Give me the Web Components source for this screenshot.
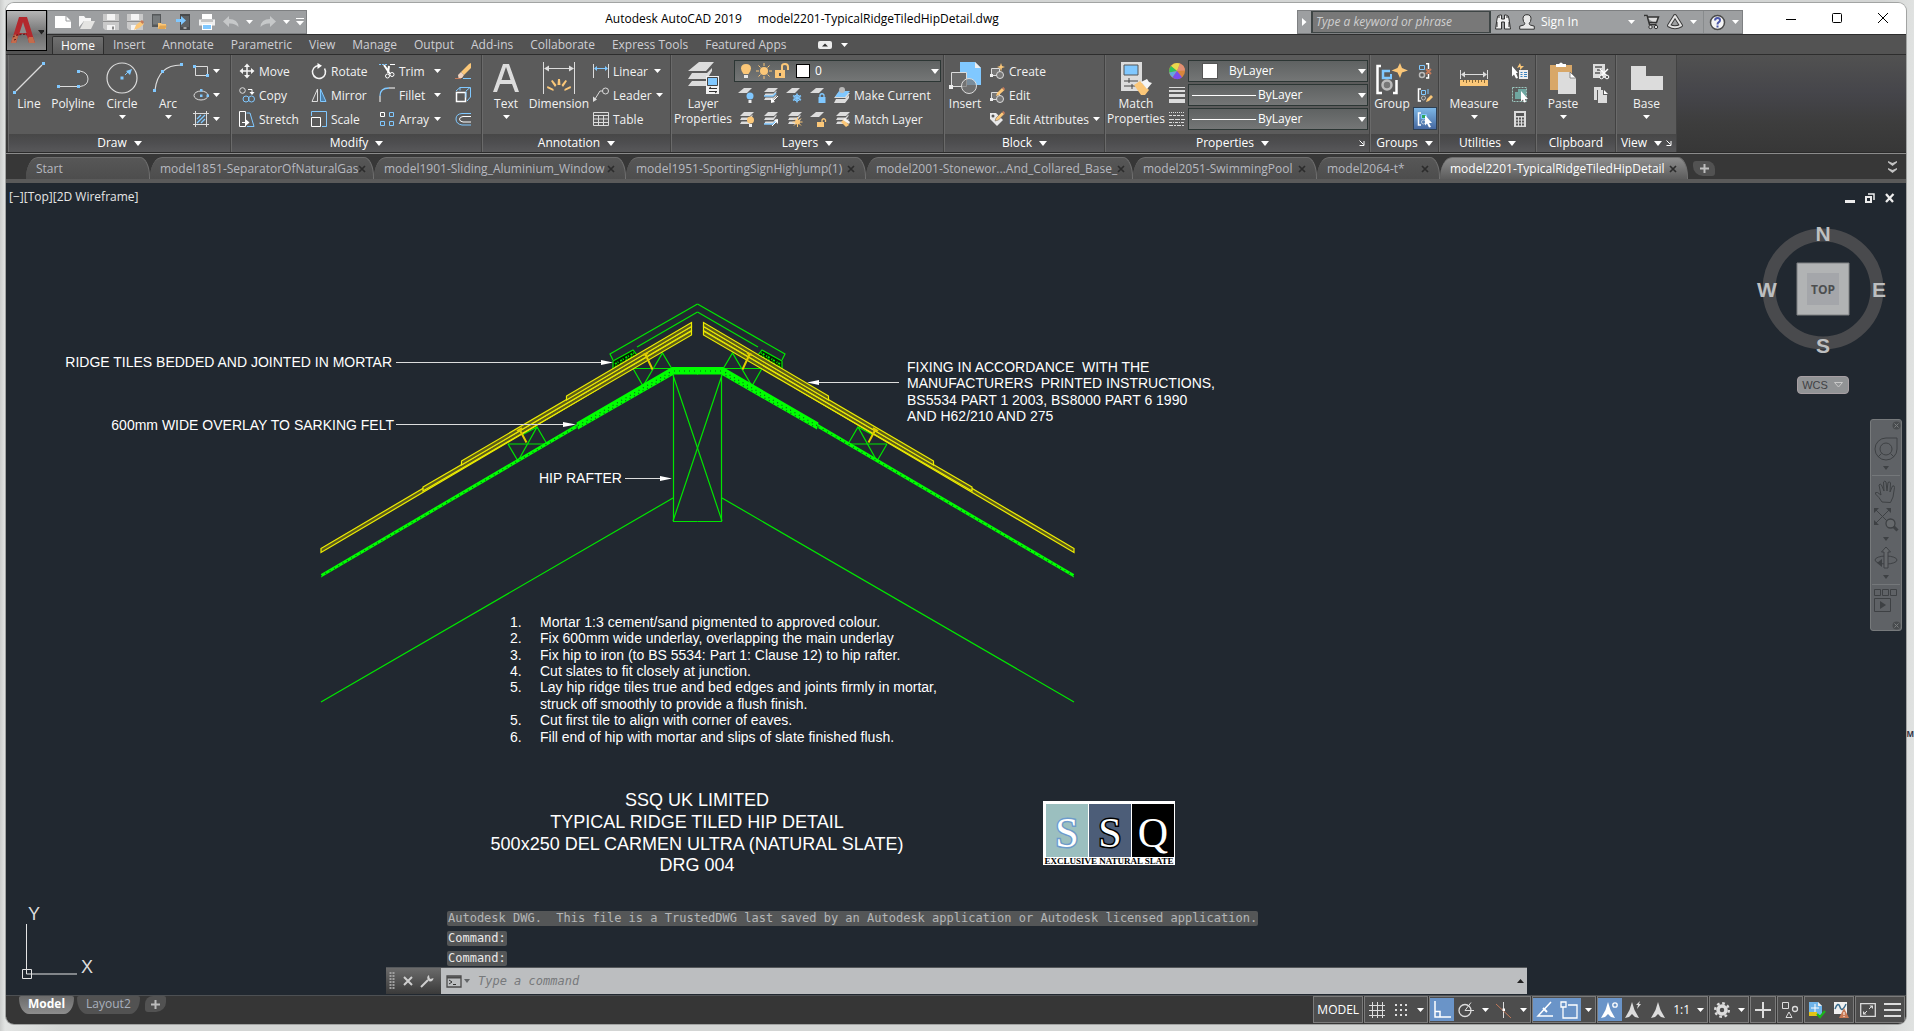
<!DOCTYPE html>
<html lang="en">
<head>
<meta charset="utf-8">
<title>Autodesk AutoCAD 2019</title>
<style>
  html, body {
    height: 100%;
    margin: 0;
  }
  body {
    font: 12px/16px "Open Sans", "Noto Sans", sans-serif;
    background: #d3d5d4;
    overflow: hidden;
  }
</style>
</head>
<body>
<cad-app></cad-app>

<script>
// Palette shared by the icons
const W = '#dcdcdc';
const B = '#80c8ff';
const O = '#fbc778';
const R = '#c47a5a';

const sheets = (fill = W) => `
  <path d="M6 1h10l-4 4H2z" fill="${fill}"/><path d="M3.500 6.500h8l3-3v1.500l-3 4H2z" fill="${W}"/>
  <path d="M3.500 10.500h8l3-3v1.500l-3 4H2z" fill="${W}"/>`;
const bracket = `<path d="M4 2H1.500v12H4" fill="none" stroke="#fff" stroke-width="1.500"/>`;

// name: [width, height, markup]
const icons = {
  caret: [7, 4, `<path d="M0 0h7L3.500 4z" fill="#fff"/>`],
  wide: [8, 5, `<path d="M0 0h8L4 5z" fill="#fff"/>`],
  up: [7, 4, `<path d="M0 4h7L3.500 0z" fill="#222"/>`],
  launch: [6, 6, `<path d="M0.500 0.500l4 4M5 1v4.500H0.500" fill="none" stroke="#fff"/>`],
  logo: [24, 28, `<path d="M0 27 8 1h8l8 26h-6l-2-7q-4-5-9 0l-2 7z" fill="#b3282d"/><path d="M12 6 8.500 17h7z" fill="#8d8d8d"/>
    <path d="M0 27l2-7q2-3 5 0l-2 7zM24 27l-2-6-4 0-1 2 1 4z" fill="#c46c4c"/><path d="M2 21l4-2 10-1M3 24l3-1" stroke="#5d1114" stroke-dasharray="2 1.500" fill="none"/>`],

  // quick access
  fresh: [16, 16, `<path d="M0 2h11l5 5v7H0z" fill="#fff"/><path d="M11 2v5h5" fill="none" stroke="#9b9d9f"/>`],
  open: [18, 16, `<path d="M1 13V2h5l1.500 2H13v3H6z" fill="#f6f6f6"/><path d="M6 7h11l-4 8H2z" fill="#e4e4e2"/>`],
  save: [16, 16, `<path d="M0 0h16v16H2l-2-2z" fill="#c9c9c9"/><path d="M4 0h8v6H4zM4 11h8v5H4z" fill="#f4f4f4"/><path d="M0 7.500h16" stroke="#8f8f8f"/><path d="M9 12.500h2v3H9z" fill="#888"/>`],
  saveas: [16, 16, `<path d="M0 0h16v16H2l-2-2z" fill="#c9c9c9"/><path d="M4 0h8v6H4zM4 11h5v5H4z" fill="#f4f4f4"/><path d="M0 7.500h16" stroke="#8f8f8f"/><path d="M7 16l2-5 5-4 3 3-5 4z" fill="${O}"/><path d="M13 7.500 15 6l2 2-1.500 2z" fill="${R}"/>`],
  webopen: [16, 16, `<path d="M1 0h9v13H1z" fill="#55585a"/><path d="M2 1.500h7v9H2z" fill="#777b7d"/><path d="M7 15V9h3l1 1h4v5z" fill="${O}"/><path d="M9 11.500h7l-2 3.500H7z" fill="#e0a552"/>`],
  websave: [16, 16, `<path d="M5 0h10v16H5z" fill="#484a4c"/><path d="M6 2h8v11H6z" fill="#5e6163"/><path d="M1 5h5V2l5 4.500L6 11V8H1z" fill="${B}"/><path d="M8.500 14h3" stroke="#fff"/>`],
  print: [16, 16, `<path d="M3 0h10v5H3z" fill="#fff"/><path d="M0 5.500h16v6H0z" fill="#efefef"/><path d="M2 7h12" stroke="#999"/><path d="M3 10h10v6H3z" fill="#fff"/><path d="M4 11h8v4H4z" fill="${B}"/>`],
  undo: [16, 12, `<path d="M6 0v3q9 0 9.500 8Q12 7 6 7.500V11L0 5.500z" fill="#c6c8c9"/>`],
  redo: [16, 12, `<path d="M10 0v3Q1 3 .5 11 4 7 10 7.500V11l6-5.500z" fill="#c6c8c9"/>`],
  custom: [8, 8, `<path d="M0 .5h8" stroke="#fff"/><path d="M0 3h8L4 7.500z" fill="#fff"/>`],
  play: [5, 8, `<path d="M0 0v8l4.500-4z" fill="#fff"/>`],
  find: [16, 16, `<path d="M2 5q0-4 3-4h1.500v4h3V1H11q3 0 3 4l1.500 10h-6V8h-3v7H.5z" fill="#f2f2f2" stroke="#333"/><path d="M2 8v5M14 8v5M3 3h2M11 3h2" stroke="#333"/>`],
  user: [16, 16, `<path d="M8 .7q4 0 4 4 0 3-2 5 .3 1.500 5.300 2.500v3H.7v-3Q5.700 11.200 6 9.700q-2-2-2-5 0-4 4-4z" fill="#e8e8e8" stroke="#333"/>`],
  cart: [17, 16, `<path d="M1 1.500h3l2.500 9h7M4.500 3h11l-2 5.500H6" fill="#ddd" stroke="#333" stroke-width="1.500"/><circle cx="7.500" cy="13" r="1.700" fill="#ddd" stroke="#333"/><circle cx="13" cy="13" r="1.700" fill="#ddd" stroke="#333"/>`],
  a360: [16, 16, `<path d="M8 2 2 11.500q6 3.500 12 0z" fill="none" stroke="#3c3c3c" stroke-width="4" stroke-linejoin="round"/><path d="M8 2 2 11.500q6 3.500 12 0z" fill="none" stroke="#e4e4e4" stroke-width="2" stroke-linejoin="round"/>`],
  help: [17, 17, `<circle cx="8.500" cy="8.500" r="7" fill="#f4f4f4" stroke="#4a4a4a" stroke-width="1.500"/><path d="M6 6.500q0-2.500 2.500-2.500t2.500 2.200q0 1.300-1.500 2.200-1 .6-1 2" fill="none" stroke="#4b56a8" stroke-width="2"/><path d="M7.500 11.500h2v2h-2z" fill="#4b56a8"/>`],
  min: [12, 12, `<path d="M1 7.500h10" stroke="#000"/>`],
  max: [12, 12, `<rect x="1.500" y="1.500" width="9" height="9" rx="1" fill="none" stroke="#000"/>`],
  close: [12, 12, `<path d="M1 1l10 10M11 1 1 11" stroke="#000"/>`],
  panelmin: [14, 8, `<rect width="14" height="8" rx="2" fill="#ededed"/><path d="M4 5.500h6L7 2.500z" fill="#333"/>`],

  // draw
  line: [32, 32, `<path d="M3 29 29 3" stroke="${W}" stroke-width="1.200"/><path d="M0 29h3v3H0zM29 0h3v3h-3z" fill="${B}"/>`],
  polyline: [32, 32, `<path d="M2 24.500h21q8-1 8-7.500T23 9" fill="none" stroke="${W}"/><path d="M0 23h3v3H0zM20 23h3v3h-3zM20 8h3v3h-3z" fill="${B}"/>`],
  circle: [32, 32, `<circle cx="16" cy="16" r="15" fill="none" stroke="${W}" stroke-width="1.200"/><path d="M14.500 14.500h3v3h-3z" fill="${B}"/><path d="M19 13l3-3" stroke="${B}"/><path d="M20 9l6-2-2 6z" fill="${B}"/>`],
  arc: [32, 32, `<path d="M3 28Q6 3 29 3" fill="none" stroke="${W}" stroke-width="1.200"/><path d="M1 27h3v3H1zM9 8h3v3H9zM28 1h3v3h-3z" fill="${B}"/>`],
  rect: [16, 16, `<path d="M2.500 3.500h12v9h-12z" fill="none" stroke="${W}"/><path d="M0 2h3v3H0zM13 11h3v3h-3z" fill="${B}"/>`],
  ellipse: [16, 16, `<ellipse cx="8" cy="8.500" rx="7" ry="4.500" fill="none" stroke="${W}"/><path d="M7 2h2.500v2.500H7zM7 7.500h2.500V10H7zM13.500 7.500H16V10h-2.500z" fill="${B}"/>`],
  hatch: [16, 16, `<path d="M0 2.500h16M0 13.500h16M2.500 0v16M13.500 0v16" stroke="${W}"/><path d="M4 8l4-4M4 12l8-8M8 12l4-4" stroke="${B}" stroke-width="1.300"/>`],

  // modify
  move: [16, 16, `<path d="M8 2v12M2 8h12" stroke="#f4f4f4" stroke-width="1.500"/><path d="M5 4 8 .5 11 4zM5 12l3 3.500 3-3.500zM4 5 .5 8 4 11zM12 5l3.500 3L12 11z" fill="#f4f4f4"/>`],
  copy: [16, 16, `<circle cx="3.500" cy="3.500" r="2.800" fill="none" stroke="${W}"/><path d="M9 2.500h4V6" fill="none" stroke="#fff"/><path d="M10.500 5h5L13 8z" fill="#fff"/><circle cx="7" cy="12" r="3" fill="none" stroke="${B}"/><circle cx="12.500" cy="12" r="3" fill="none" stroke="${B}"/>`],
  stretch: [16, 16, `<path d="M.5.500h6v15h-6z" fill="none" stroke="#fff"/><path d="M7.500 2H11l4 13.500H8" fill="none" stroke="${B}"/><path d="M3 11.500h5" stroke="#fff"/><path d="M7 8.500v6l3.500-3z" fill="#fff"/>`],
  rotate: [16, 16, `<path d="M13.500 5.500a6.500 6.500 0 1 1-6-3" fill="none" stroke="#f4f4f4" stroke-width="1.500"/><path d="M6.500 0 11 2.800 6.500 6z" fill="#fff"/>`],
  mirror: [16, 16, `<path d="M6.500 2v12.500H1z" fill="none" stroke="${W}"/><path d="M9.500 2v12.500H15z" fill="#4d7fa8" stroke="${B}"/>`],
  scale: [16, 16, `<path d="M.5 5V.5h15v15H11" fill="none" stroke="${B}"/><path d="M.5 6.500h9v9h-9z" fill="none" stroke="#fff"/>`],
  trim: [16, 16, `<path d="M0 1.500h9" stroke="${B}" stroke-dasharray="2 1"/><path d="M11 1.500h5" stroke="#fff"/><path d="M5 2l6 9M10 3 9 10" stroke="#fff" stroke-width="2"/><circle cx="8.500" cy="13" r="2" fill="none" stroke="#fff"/><circle cx="13" cy="11.500" r="2" fill="none" stroke="#fff"/>`],
  fillet: [16, 16, `<path d="M1 15V9" stroke="#fff"/><path d="M1 9q0-8 9-8" fill="none" stroke="${B}" stroke-width="1.300"/><path d="M10 1h6" stroke="#fff"/>`],
  array: [16, 16, `<path d="M1.500 1.500h4v4h-4z" fill="none" stroke="#fff"/><path d="M10.500 1.500h4v4h-4zM1.500 10.500h4v4h-4zM10.500 10.500h4v4h-4z" fill="none" stroke="${B}"/>`],
  erase: [16, 16, `<path d="M6 9 14 1l2-1v5l-7 7z" fill="${O}"/><path d="M3 12l3-3 3 3-2 3H3.500z" fill="#f1d3bf"/><path d="M0 15.500h6" stroke="${R}"/><path d="M8 15.500h8" stroke="${B}"/>`],
  explode: [16, 16, `<path d="M1.500 5.500h9v9h-9z" fill="none" stroke="#fff" stroke-width="1.500"/><path d="M1 4l4-3.500h10.500V10L12 14M11 4l4-3.500M11 4.500v6M5 .5v3" fill="none" stroke="${B}"/>`],
  offset: [16, 16, `<path d="M16 2.500H7Q1 3 1 8t6 6h9" fill="none" stroke="${B}"/><path d="M16 5.500H8Q4.500 6 4.500 8.200T8 11h8" fill="none" stroke="#fff"/>`],

  // annotation
  text: [32, 32, `<path d="M3 30 13 2h6l10 28h-4l-3-8H10l-3 8zM11.500 18h9L16 5z" fill="${W}"/>`],
  dimension: [32, 32, `<path d="M.5 0v32M31.500 0v32M2 6.500h28" stroke="${W}"/><path d="M1 6.500 6 3.500v6zM31 6.500 26 3.500v6z" fill="${W}"/><path d="M15 17h2l.5 6h-3zM8 19l1.500-1 4 5-1.500 2zM24 19l-1.500-1-4 5 1.500 2zM4 26l.5-2 6 3v2zM28 26l-.5-2-6 3v2z" fill="${O}"/>`],
  linear: [16, 16, `<path d="M.5 1v14M15.500 1v14" stroke="${W}"/><path d="M2 5.500h12" stroke="${B}"/><path d="M1 5.500 4 3v5zM15 5.500 12 3v5z" fill="${B}"/>`],
  leader: [16, 16, `<circle cx="12.500" cy="4" r="3" fill="none" stroke="${W}"/><path d="M9.500 4H7L2 12" fill="none" stroke="${W}"/><path d="M0 15V9.500l4 3z" fill="${W}"/>`],
  table: [16, 16, `<path d="M.5 1.500h15v13H.5zM.5 4.500h15M.5 8h15M.5 11.500h15M5.500 5v10M10.500 5v10" fill="none" stroke="${W}"/>`],

  // layers
  layers: [32, 32, `<path d="M12 0h15L19 9H1zM5 11h15l5-5v3l-5 8H1zM5 19h15v5H1z" fill="${W}"/><path d="M19 14h13v18H19z" fill="#f1f1f1"/><path d="M20.500 15.500h10v8h-10z" fill="${B}" stroke="#444"/><path d="M22 26.500h8M22 29.500h8M24 25l-2 1.500M28 31l2-1.500" stroke="#333" fill="none"/>`],
  bulb: [16, 16, `<path d="M8 1q5 0 5 4.500Q13 8 10.500 11h-5Q3 8 3 5.500 3 1 8 1z" fill="${O}"/><path d="M6 12h4v3H6z" fill="#e8e8e8"/>`],
  sun: [16, 16, `<circle cx="8" cy="8" r="4" fill="${O}"/><path d="M8 0v3M8 13v3M0 8h3M13 8h3M2.500 2.500l2 2M11.500 11.500l2 2M2.500 13.500l2-2M11.500 4.500l2-2" stroke="${O}"/>`],
  unlock: [16, 16, `<path d="M1 7h10v8H1z" fill="${O}"/><path d="M8 7V3q0-2 3-2t3 3v3" fill="none" stroke="${O}" stroke-width="2"/><path d="M5 10h2v3H5z" fill="#555"/>`],
  layoff: [16, 16, `<path d="M6 1h8l-5 5H0z" fill="${W}"/><circle cx="12" cy="9" r="3.500" fill="${B}"/><path d="M10.500 13h3v3h-3z" fill="#eee"/>`],
  layiso: [16, 16, `${sheets()}<path d="M2 9h9l3-3" stroke="${B}" fill="none" stroke-width="1.500"/><path d="M16 9l-5 5" stroke="#fff"/><path d="M9 16v-5l4 4z" fill="#fff"/>`],
  layfrz: [16, 16, `<path d="M6 1h8l-5 5H0z" fill="${W}"/><path d="M11 6.500v9M7 8.700l8 4.500M7 13.300l8-4.600" stroke="${B}" stroke-width="1.500"/><circle cx="11" cy="11" r="3" fill="none" stroke="${B}"/>`],
  laylck: [16, 16, `<path d="M6 1h8l-5 5H0z" fill="${W}"/><path d="M8.500 10h7v6h-7z" fill="${B}"/><path d="M10 10V8q2-2.500 4 0v2" stroke="${B}" fill="none" stroke-width="1.300"/>`],
  laycur: [16, 16, `<path d="M4 6h12l-4 5H0zM2 12h9l4-4v3l-4 5H0z" fill="${W}"/><path d="M5 4h11l-5 6H1z" fill="${B}"/><circle cx="8" cy="3" r="3" fill="#b9b9b9"/>`],
  layon: [16, 16, `${sheets()}<circle cx="12.500" cy="9" r="3.500" fill="${O}"/><path d="M11 13h3v3h-3z" fill="#eee"/>`],
  layuniso: [16, 16, `${sheets()}<path d="M2 13h9l3-3" stroke="${B}" fill="none" stroke-width="1.500"/><path d="M10 15l5-5" stroke="#fff"/><path d="M16 8v5l-4-4z" fill="#fff"/>`],
  laythw: [16, 16, `${sheets()}<circle cx="11.500" cy="11" r="2.500" fill="${O}"/><path d="M11.500 6v10M6.500 11h10M8 7.500l7 7M8 14.500l7-7" stroke="${O}"/>`],
  layulk: [16, 16, `<path d="M6 1h8l-5 5H0z" fill="${W}"/><path d="M7 11h7v5H7z" fill="${O}"/><path d="M12 11V9q2-2.500 3.500 0v2" stroke="${O}" fill="none" stroke-width="1.300"/>`],
  laymch: [16, 16, `${sheets()}<path d="M7 11l3-3 5 6-3 2z" fill="${O}"/><path d="M9 9l2-2 5 4-1 2z" fill="#f3f3f3"/>`],

  // block
  insert: [32, 32, `<path d="M11 0h15l6 6v17H11z" fill="${B}"/><path d="M26 0v6h6z" fill="#eee"/><path d="M2.500 10.500h15v14h-15z" fill="#6b6b6b" stroke="${W}"/><circle cx="20" cy="24" r="7.500" fill="#777b" stroke="${W}"/><path d="M0 23h4v4H0z" fill="#eee"/>`],
  create: [16, 16, `<path d="M2.500 5.500h8v7h-8z" fill="#777" stroke="${W}"/><path d="M1 11h3v3H1z" fill="#eee"/><circle cx="11" cy="12" r="3.500" fill="#777" stroke="${W}"/><path d="M12 0l1 3 3 1-3 1-1 3.500L11 5 8 4l3-1z" fill="${O}"/>`],
  edit: [16, 16, `<path d="M2.500 5.500h8v7h-8z" fill="#777" stroke="${W}"/><path d="M1 11h3v3H1z" fill="#eee"/><circle cx="11" cy="12" r="3.500" fill="#777" stroke="${W}"/><path d="M7 9l1-3 5-5 2.500 2-5.500 5z" fill="${O}"/><path d="M13 1l1.500-1L16 2l-1 1.500z" fill="${R}"/>`],
  editattr: [16, 16, `<path d="M1 2h6l7 7-6 6-7-7z" fill="#e9e9e9"/><circle cx="4" cy="5" r="1.500" fill="#555"/><path d="M6 10l1-3 6-6 2.500 2-6 6z" fill="${O}" stroke="#5b5b5b" stroke-width=".5"/><path d="M13 1l1.500-1L16 2l-1 1.500z" fill="${R}"/>`],

  // properties
  match: [32, 32, `<path d="M1 0h21v29H1z" fill="${W}"/><path d="M4 3h14v10H4z" fill="${B}" stroke="#555"/><path d="M4 19h14M4 24h12M9 16v5M12 22v5" stroke="#444" fill="none"/><path d="M14 23l6-4 9 9-4 5h-4z" fill="${O}"/><path d="M21 20l6-3 2 3 3 1-5 6z" fill="#f5f5f5"/>`],
  wheel: [16, 16, `<circle cx="8" cy="8" r="8" fill="#d8863c"/><path d="M8 8 2 3a8 8 0 0 1 9-2.500z" fill="#e9d94e"/><path d="M8 8 .2 9.500A8 8 0 0 1 2 3z" fill="#2fc45c"/><path d="M8 8 3.500 14.500A8 8 0 0 1 .2 9.500z" fill="#63a7e0"/><path d="M8 8l5 6.300a8 8 0 0 1-9.500.2z" fill="#7a4df0"/><path d="M8 8l3-7.500a8 8 0 0 1 5 7z" fill="#e28f74"/>`],
  weights: [16, 16, `<path d="M0 .5h16" stroke="${W}"/><path d="M0 4h16" stroke="${W}" stroke-width="2"/><path d="M0 8.500h16" stroke="${W}" stroke-width="3"/><path d="M0 14h16" stroke="${W}" stroke-width="4"/>`],
  types: [16, 16, `<path d="M0 1.500h16" stroke="${W}" stroke-dasharray="1 1"/><path d="M0 4.500h16" stroke="${W}" stroke-dasharray="3 1"/><path d="M0 8.500h16" stroke="${W}" stroke-dasharray="5 1"/><path d="M0 11.500h16" stroke="${W}" stroke-dasharray="3 1 1 1"/><path d="M0 14.500h16" stroke="${W}" stroke-dasharray="4 1 2 1"/>`],

  // groups
  group: [32, 32, `<path d="M5 4H1.500v27H6M17 31h3.500V18" fill="none" stroke="#fff" stroke-width="2.500"/><path d="M14 9H7v7h9" fill="none" stroke="${B}" stroke-width="2.500"/><path d="M15 12v3" stroke="${B}" stroke-width="2"/><circle cx="11" cy="23" r="4.500" fill="#777" stroke="#bbb" stroke-width="2.500"/><path d="M24 1l2 5 6 2.500-6 2L24 16l-2.500-5.500-6-2 6-2.500z" fill="${O}"/>`],
  ungroup: [16, 16, `<path d="M2.500 2.500h5v4h-5z" fill="none" stroke="${B}"/><circle cx="5" cy="12" r="2.500" fill="none" stroke="#bbb" stroke-width="1.500"/><path d="M9 .8h2.500V6M11.500 11v4H9" fill="none" stroke="#fff" stroke-width="1.500"/><path d="M9 6l5 5M14 6l-5 5" stroke="${R}" stroke-width="2"/>`],
  groupedit: [16, 16, `${bracket}<path d="M4.500 3.500h4v4h-4zM11 2v5" fill="none" stroke="${B}"/><circle cx="6.500" cy="11" r="2" fill="none" stroke="#bbb"/><path d="M9 15l1-3 4-4 2 2-4 4z" fill="${O}"/>`],
  groupsel: [16, 16, `${bracket}<path d="M4.500 3.500h5v4h-5z" fill="#2da65f" stroke="${B}"/><circle cx="6.500" cy="11" r="2" fill="none" stroke="#bcd"/><path d="M8 4l7 8h-3l2 4-2 .5-2-4-2 2z" fill="#fff"/>`],

  // utilities, clipboard, view
  measure: [32, 32, `<path d="M2.500 8v9M29.500 8v9M4 12.500h24" stroke="${W}"/><path d="M3 12.500 7 9.500v6zM29 12.500 25 9.500v6z" fill="${W}"/><path d="M2 18h28v6H2z" fill="${O}"/><path d="M5.500 18v2M8.500 18v3M11.500 18v2M14.500 18v3M17.500 18v2M20.500 18v3M23.500 18v2M26.500 18v3" stroke="#8a6a37"/>`],
  quicksel: [16, 16, `<path d="M0 3l6 7H4l2 5-2 .5-2-4-2 2z" fill="#fff"/><path d="M8 0l1 3h3L8 7V4L5 5z" fill="${O}"/><path d="M7 7h9v9H7z" fill="#eee"/><path d="M8.500 9.500h2M12 9.500h3M8.500 11.500h2M12 11.500h3M8.500 13.500h2M12 13.500h3" stroke="#3a83c0"/>`],
  selectall: [16, 16, `<path d="M.5.500h14v14H.5z" fill="none" stroke="#9bc7bf" stroke-dasharray="2 1"/><path d="M3 5h3V2h8v7h-4v3H3z" fill="#6fa6a0"/><path d="M9 4l7 8h-3l1 3-2 .5-1-3-2 2z" fill="#fff"/>`],
  calc: [16, 16, `<path d="M2 0h12v16H2z" fill="${W}"/><path d="M4 2h8v3H4z" fill="#555"/><path d="M4 7.500h8M4 10.500h8M4 13.500h8" stroke="#555" stroke-width="2" stroke-dasharray="2 1"/>`],
  paste: [32, 32, `<path d="M3 3h22v25H3z" fill="#d8a768"/><path d="M9 5V2h3q2-3 4 0h3v3z" fill="#fff"/><path d="M11 10h12l6 6v16H11z" fill="${W}"/><path d="M23 10v6h6z" fill="#fff" stroke="#666" stroke-width=".7"/>`],
  cut: [16, 16, `<path d="M0 1h12v14H0z" fill="${W}"/><path d="M2 4h7M4 7h5M2 10h5" stroke="#555" stroke-width="1.300"/><path d="M7 6l8 8M15 6l-8 8" stroke="#fff" stroke-width="1.500"/><circle cx="8.500" cy="14" r="1.800" fill="#5b5b5b" stroke="#fff"/><circle cx="14" cy="14" r="1.800" fill="#5b5b5b" stroke="#fff"/>`],
  copyclip: [16, 16, `<path d="M1 0h7v3H4v10H1z" fill="${W}"/><path d="M5 3h5v5h4v8H5z" fill="${W}"/><path d="M11 3v4h4z" fill="#fff"/>`],
  base: [32, 32, `<path d="M0 4h15v10h17v14H0z" fill="${W}"/>`],

  // document window
  tabx: [8, 8, `<path d="M1 1l6 6M7 1 1 7" stroke="#2c2c2c" stroke-width="1.700"/>`],
  add: [9, 9, `<path d="M4.500 0v9M0 4.500h9" stroke="#bdbdbd" stroke-width="2"/>`],
  chev: [9, 12, `<path d="M0 0l4.500 2L9 0v1.500L4.500 5 0 1.500zM0 7l4.500 2L9 7v1.500L4.500 12 0 8.500z" fill="#c2c2c2"/>`],
  docmin: [12, 12, `<path d="M1 8h10v3H1z" fill="#ececec"/>`],
  docmax: [12, 12, `<path d="M4 2h6v6" fill="none" stroke="#ececec" stroke-width="1.500"/><path d="M2 5h5v5H2z" fill="none" stroke="#ececec" stroke-width="2"/>`],
  docclose: [12, 12, `<path d="M2 2l7 8M9.500 2 2 10" stroke="#ececec" stroke-width="2.300"/>`],

  // navigation bar
  wheelnav: [24, 24, `<path d="M12 1h11v11a11 11 0 1 1-11-11z" fill="none" stroke="#3e4144"/><circle cx="12" cy="12" r="6" fill="none" stroke="#3e4144"/><path d="M7.500 16.500 4 20M16.500 16.500 20 20" stroke="#3e4144"/>`],
  pan: [24, 24, `<path d="M8 22Q5 17 1.500 14q-1-2 2-1.500L7 15 5 5q1-2 2.500 0L10 11l-.5-9q1.500-2 2.500 0l1 9 1-8.500q2-1.500 2.500.5L16 12l2.500-6q2-1 2 1.500L19 17l-2.500 5.500z" fill="none" stroke="#3e4144"/>`],
  zoom: [24, 24, `<path d="M2 2l14 14M16 1 1 16" stroke="#3e4144"/><path d="M0 0h5L0 5zM17 0h-5l5 5zM0 17h5l-5-5z" fill="#3e4144"/><circle cx="16.500" cy="15.500" r="4.500" fill="#66696c" stroke="#3e4144" stroke-width="1.300"/><path d="M19.500 18.500l4 4" stroke="#3e4144" stroke-width="3"/>`],
  orbit: [24, 24, `<ellipse cx="12" cy="14" rx="11" ry="4" fill="none" stroke="#3e4144"/><path d="M10 22V6H7.500L12 1l4.500 5H14v16z" fill="#66696c" stroke="#3e4144"/><path d="M3 17l5-4v8z" fill="#3e4144"/>`],
  motion: [24, 24, `<path d="M.5.500h6v6h-6zM8.500.500h6v6h-6zM16.500.500h6v6h-6zM.5 9.500h16v13H.5z" fill="none" stroke="#3e4144"/><path d="M6 12v8l6-4z" fill="#3e4144"/>`],
  navcaret: [6, 4, `<path d="M0 0h6L3 4z" fill="#3e4144"/>`],
  dot: [9, 9, `<circle cx="4.500" cy="4.500" r="4" fill="#484b4e"/><path d="M2.500 2.500l4 4M6.500 2.500l-4 4" stroke="#7b7e80"/>`],

  // command line
  grip: [6, 18, `<path d="M1.500 0v18M4.500 0v18" stroke="#a0a0a0" stroke-width="2" stroke-dasharray="2 1"/>`],
  cmdx: [10, 10, `<path d="M1 1l8 8M9 1 1 9" stroke="#cfcfcf" stroke-width="2"/>`],
  wrench: [14, 14, `<path d="M1 13l7-7" stroke="#cfcfcf" stroke-width="2"/><path d="M9 1Q6 3 8 6t5 0l.5-2-3 1-1-1z" fill="#cfcfcf"/>`],
  prompt: [16, 13, `<path d="M1 1h14v11H1z" fill="none" stroke="#4b4b4b" stroke-width="1.300"/><path d="M1 2.500h14" stroke="#4b4b4b" stroke-width="2"/><path d="M3 5l3 2-3 2M7 9.500h3" fill="none" stroke="#333"/>`],

  // status bar
  grid: [16, 16, `<path d="M0 3.500h16M0 8.500h16M0 13.500h16M3.500 0v16M8.500 0v16M13.500 0v16" stroke="${W}"/>`],
  snap: [14, 14, `<path d="M1 2h12M1 7h12M1 12h12" stroke="${W}" stroke-width="2" stroke-dasharray="2 3"/>`],
  ortho: [18, 18, `<path d="M2 0v16h16M2 10.500h5v5" fill="none" stroke="#fff" stroke-width="1.500"/>`],
  polar: [16, 16, `<circle cx="7" cy="8.500" r="6" fill="none" stroke="${W}" stroke-width="1.300"/><path d="M7 8.500h9M7 8.500l6-8" stroke="${W}"/>`],
  iso: [16, 16, `<path d="M7.500 0v16" stroke="${W}"/><path d="M0 2l15 14" stroke="${R}"/><path d="M6.500 6.500h2.500V9H6.500z" fill="#fff"/>`],
  otrack: [18, 18, `<path d="M15 1 2 15h15" fill="none" stroke="#fff" stroke-width="1.500"/><path d="M7 7l4 4" stroke="#fff" stroke-width="2"/>`],
  osnap: [18, 18, `<path d="M3 6v11h14V4H8" fill="none" stroke="#fff" stroke-width="1.300"/><path d="M1 1h5v5H1z" fill="#6a94c8" stroke="#fff" stroke-width="1.300"/>`],
  annovis: [18, 18, `<path d="M7 1l2.500 8 4.500 8-4-1-3-3-3 3-4 1 4.500-8z" fill="#fff"/><circle cx="14" cy="4" r="2.200" fill="none" stroke="#fff" stroke-width="1.300"/>`],
  annoauto: [18, 18, `<path d="M7 1l2.500 8 4.500 8-4-1-3-3-3 3-4 1 4.500-8z" fill="${W}"/><path d="M15 0l-4 4h2l-1 4 4-5h-2z" fill="${W}"/>`],
  anno: [18, 18, `<path d="M9 1l2.500 8 4.500 8-4-1-3-3-3 3-4 1 4.500-8z" fill="${W}"/>`],
  gear: [16, 16, `<circle cx="8" cy="8" r="4" fill="none" stroke="${W}" stroke-width="3.500"/><circle cx="8" cy="8" r="6.800" fill="none" stroke="${W}" stroke-width="2.400" stroke-dasharray="2.670 2.670"/>`],
  plus: [16, 16, `<path d="M8 0v16M0 8h16" stroke="${W}" stroke-width="2"/>`],
  shapes: [16, 16, `<path d="M.5.500h6v6h-6zM7 10l-3 5.500h6z" fill="none" stroke="${W}"/><circle cx="13" cy="7" r="2.500" fill="none" stroke="${W}" stroke-width="1.300"/>`],
  trusted: [16, 16, `<path d="M0 0h9l4 4v9H0z" fill="#6fb4ea"/><path d="M9 0v4h4z" fill="#eee"/><path d="M0 10h8v4H0z" fill="#e3c318"/><path d="M2 6h8M6 2v8" stroke="#fff"/><path d="M8 12l3 3 5-6" stroke="#1bb51b" stroke-width="2.200" fill="none"/>`],
  perf: [16, 16, `<path d="M1 0h13v12H1z" fill="#f0f0f0"/><path d="M2 7q3-8 5-2t6-3" stroke="#3d6f8f" stroke-width="1.500" fill="none"/><path d="M11 6l5 10H6z" fill="#c97a55"/><path d="M11 10v3M11 14v1" stroke="#fff"/>`],
  clean: [16, 14, `<path d="M.7.700h14.600v12.600H.7z" fill="none" stroke="${W}" stroke-width="1.300"/><path d="M9 6l3-3M4 11l3-3" stroke="${W}"/><path d="M9.500 2.500H13V6zM3 8v3.500h3.500z" fill="${W}"/>`],
  menu: [17, 16, `<path d="M0 2h17M0 8h17M0 14h17" stroke="${W}" stroke-width="2"/>`],
};

// Base class: every element fills its open shadow root once
class CadElement extends HTMLElement {
  connectedCallback() {
    if (this.shadowRoot) return;
    this.attachShadow({ mode: 'open' });
    this.shadowRoot.innerHTML = this.render();
  }
}

class CadIcon extends CadElement {
  render() {
    const [w, h, body] = icons[this.getAttribute('name')];
    return `
      <style>
        :host { display: inline-flex; flex: none; }
        svg { display: block; overflow: visible; }
      </style>
      <svg width="${w}" height="${h}" viewBox="0 0 ${w} ${h}" aria-hidden="true">${body}</svg>
    `;
  }
}

// Plain icon button, used in bars
class IconButton extends CadElement {
  render() {
    const icon = this.getAttribute('icon');
    return `
      <style>
        :host { display: inline-flex; flex: none; width: 24px; }
        :host([narrow]) { width: 13px; }
        :host([on]) button { background: #6a94c8; }
        button {
          flex: 1;
          display: flex;
          align-items: center;
          justify-content: center;
          padding: 0;
          border: 0;
          background: none;
          color: inherit;
          font: inherit;
        }
      </style>
      <button type="button" aria-label="${this.getAttribute('label') || icon}"><cad-icon name="${icon}"></cad-icon></button>
    `;
  }
}

// Ribbon button: small (icon beside label) or big (icon over label)
class ToolButton extends CadElement {
  render() {
    const menu = this.hasAttribute('menu') ? '<cad-icon class="menu" name="caret"></cad-icon>' : '';
    return `
      <style>
        :host { display: block; height: 24px; }
        :host([big]) { height: 75px; }
        button {
          box-sizing: border-box;
          width: 100%;
          height: 100%;
          display: flex;
          align-items: center;
          gap: 4px;
          padding: 0 6px 0 4px;
          border: 0;
          background: none;
          color: #f2f2f2;
          font: inherit;
          line-height: 15px;
          white-space: nowrap;
          text-align: left;
        }
        .menu { margin-left: auto; }
        :host([big]) button {
          flex-direction: column;
          gap: 2px;
          padding: 3px 0 0;
          text-align: center;
        }
        :host([big]) .menu { margin: 2px auto 0; }
        :host([on]) button {
          border: 1px solid #2e3f52;
          padding: 0 3px;
          height: 23px;
          background: linear-gradient(#7db7e6, #4668a0);
        }
      </style>
      <button type="button" aria-label="${this.getAttribute('label') || this.textContent.trim()}">
        <cad-icon name="${this.getAttribute('icon')}"></cad-icon><slot></slot>${menu}
      </button>
    `;
  }
}

class RibbonPanel extends CadElement {
  render() {
    const arrow = this.hasAttribute('plain') ? '' : '<cad-icon name="wide"></cad-icon>';
    const launch = this.hasAttribute('launcher') ? '<cad-icon class="launch" name="launch"></cad-icon>' : '';
    return `
      <style>
        :host {
          box-sizing: border-box;
          display: flex;
          flex-direction: column;
          flex: none;
          border-right: 1px solid #424242;
          border-left: 1px solid #6a6a6a;
          background: #5b5b5b;
        }
        .body { height: 75px; padding-top: 4px; display: flex; }
        footer {
          display: flex;
          align-items: center;
          justify-content: center;
          height: 18px;
          color: #fff;
          background: linear-gradient(#474747, #4e4e50 50%, #58585a);
        }
        button {
          display: flex;
          align-items: center;
          gap: 7px;
          padding: 0;
          border: 0;
          background: none;
          color: inherit;
          font: inherit;
        }
        .title { margin: 0 auto; }
        .launch { margin-right: 4px; }
      </style>
      <div class="body"><slot></slot></div>
      <footer><button class="title" type="button">${this.getAttribute('heading')}${arrow}</button>${launch}</footer>
    `;
  }
}

// Column-wise stack of small tools, three to a column
class ToolGrid extends CadElement {
  render() {
    return `
      <style>
        :host {
          display: grid;
          grid-auto-flow: column;
          grid-template-rows: repeat(3, 24px);
        }
      </style>
      <slot></slot>
    `;
  }
}

class CadCombo extends CadElement {
  render() {
    return `
      <style>
        :host {
          box-sizing: border-box;
          display: flex;
          align-items: center;
          height: 22px;
          padding: 0 1px 0 3px;
          border: 1px solid #2c3634;
          background: linear-gradient(#5f6262, #747676);
          color: #fff;
        }
        select {
          flex: 1;
          min-width: 0;
          appearance: none;
          padding: 0;
          border: 0;
          background: none;
          color: inherit;
          font: inherit;
        }
      </style>
      <slot></slot>
      <select aria-label="${this.getAttribute('label')}"><option>${this.getAttribute('value')}</option></select>
      <cad-icon name="wide"></cad-icon>
    `;
  }
}

class TitleBar extends CadElement {
  render() {
    const quick = ['fresh', 'open', 'save', 'saveas', 'webopen', 'websave', 'print', 'undo'];
    return `
      <style>
        :host {
          display: flex;
          align-items: flex-end;
          height: 31px;
          background: #fff;
          color: #000;
        }
        .bar {
          box-sizing: border-box;
          display: flex;
          height: 24px;
          border: 1px solid #7e8082;
          background: #9d9fa1;
          color: #fff;
        }
        .quick { margin-left: 41px; padding-left: 3px; }
        h1 {
          flex: 1;
          display: flex;
          justify-content: center;
          gap: 16px;
          margin: 0 0 7px;
          font: inherit;
          white-space: nowrap;
        }
        input {
          box-sizing: border-box;
          width: 180px;
          margin: 0;
          padding: 0 3px;
          border: 2px solid #3e4545;
          border-width: 1px 2px;
          background: #787878;
          color: #fff;
          font: inherit;
          font-style: italic;
        }
        input::placeholder { color: #cfcfcf; opacity: 1; }
        .sign {
          display: flex;
          align-items: center;
          width: 100px;
          padding: 0 4px 0 2px;
          border: 0;
          background: none;
          color: inherit;
          font: inherit;
        }
        .sign cad-icon { margin-left: auto; }
        .help { margin-left: 3px; border-left: 1px solid #888b8d; padding-left: 1px; }
        nav { display: flex; width: 138px; height: 31px; margin-left: 25px; }
        nav icon-button { width: 46px; height: 29px; }
      </style>
      <div class="bar quick">
        ${quick.map(n => `<icon-button icon="${n}"></icon-button>`).join('')}
        <icon-button narrow icon="caret"></icon-button>
        <icon-button icon="redo"></icon-button>
        <icon-button narrow icon="caret"></icon-button>
        <icon-button narrow icon="custom"></icon-button>
      </div>
      <h1><span>Autodesk AutoCAD 2019</span><span>model2201-TypicalRidgeTiledHipDetail.dwg</span></h1>
      <div class="bar">
        <icon-button narrow icon="play"></icon-button>
        <input type="text" aria-label="Search" placeholder="Type a keyword or phrase">
        <icon-button icon="find"></icon-button>
        <icon-button icon="user"></icon-button>
        <button class="sign" type="button">Sign In<cad-icon name="caret"></cad-icon></button>
        <icon-button icon="cart"></icon-button>
        <icon-button icon="a360"></icon-button>
        <icon-button narrow icon="caret"></icon-button>
        <icon-button class="help" icon="help"></icon-button>
        <icon-button narrow icon="caret"></icon-button>
      </div>
      <nav>
        <icon-button icon="min"></icon-button>
        <icon-button icon="max"></icon-button>
        <icon-button icon="close"></icon-button>
      </nav>
    `;
  }
}

class RibbonTabs extends CadElement {
  render() {
    const tabs = ['Home', 'Insert', 'Annotate', 'Parametric', 'View', 'Manage', 'Output',
      'Add-ins', 'Collaborate', 'Express Tools', 'Featured Apps'];
    return `
      <style>
        :host {
          box-sizing: border-box;
          display: flex;
          align-items: flex-end;
          gap: 1px;
          height: 21px;
          padding-left: 46px;
          border-top: 1px solid #2d2d2d;
          border-bottom: 1px solid #2d2d2d;
          background: #535353;
          color: #cfcfd4;
        }
        a {
          height: 18px;
          padding: 0 8px;
          color: inherit;
          line-height: 18px;
          text-decoration: none;
        }
        a.on {
          height: 17px;
          border: 1px solid #2d2d2d;
          border-bottom: 0;
          border-radius: 2px 2px 0 0;
          background: linear-gradient(#707070, #5b5b5b);
          color: #fff;
        }
        icon-button { height: 19px; margin-left: 17px; }
        icon-button + icon-button { margin-left: 0; }
      </style>
      ${tabs.map((t, i) => `<a href="#" class="${i ? '' : 'on'}">${t}</a>`).join('')}
      <icon-button icon="panelmin"></icon-button>
      <icon-button narrow icon="caret"></icon-button>
    `;
  }
}

class CadRibbon extends CadElement {
  render() {
    return `
      <style>
        :host {
          display: flex;
          height: 97px;
          padding-left: 2px;
          border-bottom: 1px solid #2a2a2a;
          box-shadow: 0 1px #8b8b8b;
          margin-bottom: 1px;
          background: linear-gradient(#515151, #45454a 40%, #3d3d3d 70%, #373737);
        }
        .rows { display: flex; flex-direction: column; flex: 1; }
        .row { display: flex; height: 24px; align-items: center; }
        .layers cad-combo { margin: 1px 2px 1px 0; }
        .layers tool-button { width: 24px; }
        .layers tool-button.text { width: auto; }
        cad-combo cad-icon { margin-right: 2px; }
        .swatch { width: 12px; height: 12px; margin: 0 5px 0 4px; border: 1px solid #000; background: #fff; }
        .prop { display: grid; grid-template: repeat(3, 24px) / 22px 180px; align-items: center; }
        .prop .swatch { margin: 0 11px 0 10px; width: 14px; height: 14px; border-color: #555; }
        .stroke { width: 64px; height: 1px; margin-right: 2px; background: #fff; }
        cad-icon.mid { justify-self: center; }
      </style>

      <ribbon-panel heading="Draw" style="width:223px">
        <tool-button big icon="line" style="width:40px">Line</tool-button>
        <tool-button big icon="polyline" style="width:48px">Polyline</tool-button>
        <tool-button big menu icon="circle" style="width:50px">Circle</tool-button>
        <tool-button big menu icon="arc" style="width:42px">Arc</tool-button>
        <tool-grid style="grid-template-columns:36px">
          <tool-button menu icon="rect" label="Rectangle"></tool-button>
          <tool-button menu icon="ellipse" label="Ellipse"></tool-button>
          <tool-button menu icon="hatch" label="Hatch"></tool-button>
        </tool-grid>
      </ribbon-panel>

      <ribbon-panel heading="Modify" style="width:251px">
        <tool-grid style="grid-template-columns:3px 72px 68px 72px 4px 24px">
          <i></i><i></i><i></i>
          <tool-button icon="move">Move</tool-button>
          <tool-button icon="copy">Copy</tool-button>
          <tool-button icon="stretch">Stretch</tool-button>
          <tool-button icon="rotate">Rotate</tool-button>
          <tool-button icon="mirror">Mirror</tool-button>
          <tool-button icon="scale">Scale</tool-button>
          <tool-button menu icon="trim">Trim</tool-button>
          <tool-button menu icon="fillet">Fillet</tool-button>
          <tool-button menu icon="array">Array</tool-button>
          <i></i><i></i><i></i>
          <tool-button icon="erase" label="Erase"></tool-button>
          <tool-button icon="explode" label="Explode"></tool-button>
          <tool-button icon="offset" label="Offset"></tool-button>
        </tool-grid>
      </ribbon-panel>

      <ribbon-panel heading="Annotation" style="width:189px">
        <tool-button big menu icon="text" style="width:46px">Text</tool-button>
        <tool-button big icon="dimension" style="width:60px">Dimension</tool-button>
        <tool-grid style="grid-template-columns:78px">
          <tool-button menu icon="linear">Linear</tool-button>
          <tool-button menu icon="leader">Leader</tool-button>
          <tool-button icon="table">Table</tool-button>
        </tool-grid>
      </ribbon-panel>

      <ribbon-panel heading="Layers" style="width:273px">
        <tool-button big icon="layers" style="width:62px">Layer<br>Properties</tool-button>
        <div class="rows layers">
          <cad-combo label="Layer" value="0">
            <cad-icon name="bulb"></cad-icon><cad-icon name="sun"></cad-icon>
            <cad-icon name="unlock"></cad-icon><span class="swatch"></span>
          </cad-combo>
          <div class="row">
            <tool-button icon="layoff" label="Off"></tool-button>
            <tool-button icon="layiso" label="Isolate"></tool-button>
            <tool-button icon="layfrz" label="Freeze"></tool-button>
            <tool-button icon="laylck" label="Lock"></tool-button>
            <tool-button class="text" icon="laycur">Make Current</tool-button>
          </div>
          <div class="row">
            <tool-button icon="layon" label="Turn All Layers On"></tool-button>
            <tool-button icon="layuniso" label="Unisolate"></tool-button>
            <tool-button icon="laythw" label="Thaw All Layers"></tool-button>
            <tool-button icon="layulk" label="Unlock"></tool-button>
            <tool-button class="text" icon="laymch">Match Layer</tool-button>
          </div>
        </div>
      </ribbon-panel>

      <ribbon-panel heading="Block" style="width:161px">
        <tool-button big icon="insert" style="width:40px">Insert</tool-button>
        <tool-grid style="grid-template-columns:116px">
          <tool-button icon="create">Create</tool-button>
          <tool-button icon="edit">Edit</tool-button>
          <tool-button menu icon="editattr">Edit Attributes</tool-button>
        </tool-grid>
      </ribbon-panel>

      <ribbon-panel heading="Properties" launcher style="width:265px">
        <tool-button big icon="match" style="width:60px">Match<br>Properties</tool-button>
        <div class="prop">
          <cad-icon class="mid" name="wheel"></cad-icon>
          <cad-combo label="Object color" value="ByLayer"><span class="swatch"></span></cad-combo>
          <cad-icon class="mid" name="weights"></cad-icon>
          <cad-combo label="Lineweight" value="ByLayer"><span class="stroke"></span></cad-combo>
          <cad-icon class="mid" name="types"></cad-icon>
          <cad-combo label="Linetype" value="ByLayer"><span class="stroke"></span></cad-combo>
        </div>
      </ribbon-panel>

      <ribbon-panel heading="Groups" style="width:69px">
        <tool-button big icon="group" style="width:42px">Group</tool-button>
        <tool-grid style="grid-template-columns:24px">
          <tool-button icon="ungroup" label="Ungroup"></tool-button>
          <tool-button icon="groupedit" label="Group Edit"></tool-button>
          <tool-button on icon="groupsel" label="Group Selection On/Off"></tool-button>
        </tool-grid>
      </ribbon-panel>

      <ribbon-panel heading="Utilities" style="width:97px">
        <tool-button big menu icon="measure" style="width:68px">Measure</tool-button>
        <tool-grid style="grid-template-columns:26px">
          <tool-button icon="quicksel" label="Quick Select"></tool-button>
          <tool-button icon="selectall" label="Select All"></tool-button>
          <tool-button icon="calc" label="Quick Calculator"></tool-button>
        </tool-grid>
      </ribbon-panel>

      <ribbon-panel heading="Clipboard" plain style="width:80px">
        <tool-button big menu icon="paste" style="width:52px">Paste</tool-button>
        <tool-grid style="grid-template-columns:26px">
          <tool-button icon="cut" label="Cut"></tool-button>
          <tool-button icon="copyclip" label="Copy Clip"></tool-button>
        </tool-grid>
      </ribbon-panel>

      <ribbon-panel heading="View" launcher style="width:61px">
        <tool-button big menu icon="base" style="width:60px">Base</tool-button>
      </ribbon-panel>
    `;
  }
}

class FileTab extends CadElement {
  render() {
    const close = this.hasAttribute('fixed') ? '' : '<button type="button" aria-label="Close"><cad-icon name="tabx"></cad-icon></button>';
    return `
      <style>
        :host {
          box-sizing: border-box;
          display: flex;
          align-items: center;
          justify-content: space-between;
          flex: none;
          height: 22px;
          padding: 0 10px;
          border-top: 1px solid #6d6d6d;
          border-right: 1px solid #707070;
          border-radius: 12px 10px 0 0 / 21px 20px 0 0;
          background: linear-gradient(#575757, #4d4d4d);
          color: #b7b9c0;
          white-space: nowrap;
        }
        :host([on]) {
          background: linear-gradient(#8d8d8d, #5c5c5c);
          color: #fff;
        }
        a { color: inherit; text-decoration: none; }
        button { display: flex; padding: 0; border: 0; background: none; }
      </style>
      <a href="#"><slot></slot></a>${close}
    `;
  }
}

class FileTabs extends CadElement {
  render() {
    return `
      <style>
        :host {
          display: flex;
          align-items: flex-end;
          height: 25px;
          padding-left: 20px;
          border-bottom: 4px solid #5a5a5a;
          background: #373737;
        }
        .add {
          width: 22px;
          height: 15px;
          margin: 0 0 3px 5px;
          border-radius: 3px 8px 3px 10px;
          background: #525252;
        }
        .more { margin: 0 2px 6px auto; }
      </style>
      <file-tab fixed style="width:124px">Start</file-tab>
      <file-tab style="width:224px">model1851-SeparatorOfNaturalGas</file-tab>
      <file-tab style="width:252px">model1901-Sliding_Aluminium_Window</file-tab>
      <file-tab style="width:240px">model1951-SportingSignHighJump(1)</file-tab>
      <file-tab style="width:267px">model2001-Stonewor...And_Collared_Base_</file-tab>
      <file-tab style="width:184px">model2051-SwimmingPool</file-tab>
      <file-tab style="width:123px">model2064-t*</file-tab>
      <file-tab on style="width:248px">model2201-TypicalRidgeTiledHipDetail</file-tab>
      <icon-button class="add" icon="add"></icon-button>
      <icon-button class="more" icon="chev"></icon-button>
    `;
  }
}

// The drawing itself. Model units are screen pixels with the origin at the
// window corner, so the group is moved back by the size of the bars above.
class RidgeDrawing extends CadElement {
  render() {
    const slate = (x, y, x2, y2) => `<path d="M${x} ${y}L${x2} ${y2}v4L${x} ${y + 4}z"/>`;
    const half = `
      <g stroke="#00e600" stroke-width="1.200" fill="none">
        <path d="M697.500 304 610 354l3 6M697.500 312 637 347"/>
        <path d="M613 361l20-11 4 5-24 15z" fill="#041a04"/>
        <path d="M615 364l19-11M615 367l19-11" stroke-dasharray="2 1 1 2" stroke-width="2"/>
        <path d="M508 444h39M508 444l10 17 19-34 10 17M537 427l-15 8"/>
        <path d="M633 368.500h39M633 368.500l10 17.500 19.500-33 9.500 16"/>
        <path d="M673.500 375v146.500h24M673 375l49 146M673 498 321 702"/>
        <path d="M321 574 577 424v4L321 577.500z" fill="#0f0" stroke="none"/>
        <path d="M576.500 422.500 672 367h26v7.500h-24L578 429.500z" fill="#0f0" stroke="none"/>
        <path d="M321 576 577 426.500" stroke="#0a5a1e" stroke-dasharray="1 4"/>
        <path d="M578 425.500l95-55M582 426l90-52M674 371h24" stroke="#0a5a1e" stroke-dasharray="1 4"/>
      </g>
      <g stroke="#ecec00" stroke-width="1.200" fill="#5c5c1c">
        ${slate(321, 548.5, 600, 384)}
        ${slate(423, 487, 691.5, 331)}
        ${slate(461.5, 461, 691.5, 326.5)}
        ${slate(566.5, 396, 691.5, 322.5)}
      </g>
      <g stroke="#e0cc00" stroke-width="2">
        <path d="M645.500 354.500l7 15M519.500 429.500l7 13"/>
        <path d="M643 355l5-2M517 431l5-3"/>
      </g>`;
    const notes = [
      [627, '1.', 'Mortar 1:3 cement/sand pigmented to approved colour.'],
      [643, '2.', 'Fix 600mm wide underlay, overlapping the main underlay'],
      [660, '3.', 'Fix hip to iron (to BS 5534: Part 1: Clause 12) to hip rafter.'],
      [676, '4.', 'Cut slates to fit closely at junction.'],
      [692, '5.', 'Lay hip ridge tiles true and bed edges and joints firmly in mortar,'],
      [709, '', 'struck off smoothly to provide a flush finish.'],
      [725, '5.', 'Cut first tile to align with corner of eaves.'],
      [742, '6.', 'Fill end of hip with mortar and slips of slate finished flush.'],
    ];
    return `
      <style>
        :host { display: block; height: 100%; }
        svg { display: block; width: 100%; height: 100%; font: 14px "Liberation Sans", Arial, sans-serif; }
        text { white-space: pre; }
        .title { font-size: 18px; }
        .logo { font: 42px "Liberation Serif", serif; }
        .outline { paint-order: stroke; stroke-width: 3px; }
        .logo .strip { font: bold 9px "Liberation Serif", serif; }
      </style>
      <svg>
        <g transform="translate(-6 -183)">
          ${half}
          <g transform="translate(1395 0) scale(-1 1)">${half}</g>
          <g stroke="#fff" fill="#fff">
            <path d="M396 362.500h206M396 424.500h167M625 478.500h36M899 382.500h-80" stroke="#ddd"/>
            <path d="M601 360l12 2.500-12 2.500zM563 422l13 2.500-13 2.500zM660 476l12 2.500-12 2.500zM819 380l-12 2.500 12 2.500z" stroke="none"/>
          </g>
          <g fill="#fff">
            <text x="392" y="367" text-anchor="end">RIDGE TILES BEDDED AND JOINTED IN MORTAR</text>
            <text x="394" y="430" text-anchor="end">600mm WIDE OVERLAY TO SARKING FELT</text>
            <text x="539" y="483">HIP RAFTER</text>
            <text x="907" y="372">FIXING IN ACCORDANCE  WITH THE</text>
            <text x="907" y="388">MANUFACTURERS  PRINTED INSTRUCTIONS,</text>
            <text x="907" y="405">BS5534 PART 1 2003, BS8000 PART 6 1990</text>
            <text x="907" y="421">AND H62/210 AND 275</text>
            ${notes.map(([y, n, t]) => (n ? `<text x="510" y="${y}">${n}</text>` : '') + `<text x="540" y="${y}">${t}</text>`).join('')}
            <g class="title" text-anchor="middle">
              <text x="697" y="806">SSQ UK LIMITED</text>
              <text x="697" y="828">TYPICAL RIDGE TILED HIP DETAIL</text>
              <text x="697" y="850">500x250 DEL CARMEN ULTRA (NATURAL SLATE)</text>
              <text x="697" y="871">DRG 004</text>
            </g>
          </g>
          <g class="logo" text-anchor="middle" fill="#fff">
            <path d="M1043 801h132v64h-132z"/>
            <path d="M1046 804h42v53h-42z" fill="#9bbfbf"/>
            <path d="M1089 804h42v53h-42z" fill="#4c5d78"/>
            <path d="M1132 804h42v53h-42z" fill="#000"/>
            <text class="outline" x="1067" y="847" stroke="#6d9bcb">S</text>
            <text class="outline" x="1110" y="847" stroke="#000">S</text>
            <text x="1153" y="847">Q</text>
            <text class="strip" x="1109" y="864" fill="#000">EXCLUSIVE NATURAL SLATE</text>
          </g>
        </g>
      </svg>
    `;
  }
}

class ViewCube extends CadElement {
  render() {
    return `
      <style>
        :host { display: grid; justify-items: center; gap: 21px; width: 132px; }
        svg { display: block; overflow: visible; }
        text { text-anchor: middle; font: bold 21px "Liberation Sans", Arial, sans-serif; fill: #bdbfc0; }
        .top { font: bold 12px "Open Sans", sans-serif; fill: #4c4e50; }
        button {
          display: flex;
          align-items: center;
          gap: 6px;
          height: 18px;
          padding: 0 5px 0 4px;
          border: 1px solid #a79fa3;
          border-radius: 4px;
          background: #919395;
          color: #3f4144;
          font: 11px "Liberation Sans", Arial, sans-serif;
        }
      </style>
      <svg width="132" height="132" viewBox="-66 -66 132 132">
        <circle r="54" fill="none" stroke="#494a4d" stroke-width="13"/>
        <path d="M-26-26h52v52h-52z" fill="#b1b3b4" stroke="#7e8082"/>
        <path d="M-16-16h32v32h-32z" fill="#a4a6aa"/>
        <text class="top" y="5">TOP</text>
        <text y="-48">N</text><text y="64">S</text><text x="-56" y="8">W</text><text x="56" y="8">E</text>
      </svg>
      <button type="button">WCS<svg width="9" height="6"><path d="M.5.500h8L4.500 5z" fill="none" stroke="#c9c9c9"/></svg></button>
    `;
  }
}

class NavBar extends CadElement {
  render() {
    return `
      <style>
        :host {
          box-sizing: border-box;
          display: flex;
          flex-direction: column;
          align-items: center;
          width: 32px;
          height: 212px;
          border: 1px solid #777a7c;
          border-radius: 3px;
          background: #5f6266;
        }
        icon-button { width: 30px; height: 24px; }
        .small { height: 14px; }
        .corner { width: 12px; height: 10px; margin-left: 20px; }
        .gap { margin-top: 4px; }
        hr { width: 28px; margin: 0; border: 0; border-top: 1px solid #74777a; }
      </style>
      <icon-button class="corner" icon="dot" label="Close"></icon-button>
      <icon-button icon="wheelnav" style="margin-top:7px"></icon-button>
      <icon-button class="small" icon="navcaret"></icon-button>
      <hr>
      <icon-button class="gap" icon="pan"></icon-button>
      <icon-button class="gap" icon="zoom"></icon-button>
      <icon-button class="small" icon="navcaret"></icon-button>
      <icon-button icon="orbit"></icon-button>
      <icon-button class="small" icon="navcaret"></icon-button>
      <hr>
      <icon-button class="gap" icon="motion"></icon-button>
      <icon-button class="corner" icon="dot" label="Options" style="margin-top:auto"></icon-button>
    `;
  }
}

class CommandLine extends CadElement {
  render() {
    return `
      <style>
        :host { display: block; font: 12px/15px "DejaVu Sans Mono", monospace; }
        ol {
          display: grid;
          justify-items: start;
          gap: 5px;
          margin: 0 0 1px 61px;
          padding: 0;
          list-style: none;
        }
        li {
          padding: 0 1px;
          border-radius: 2px;
          background: #545657;
          color: #e9e9e9;
          white-space: pre;
        }
        li:first-child { color: #b4b6b8; }
        .line {
          display: flex;
          align-items: center;
          height: 26px;
          border-top: 1px solid #55585b;
          background: #bcbec0;
        }
        .tools {
          display: flex;
          align-items: center;
          justify-content: space-between;
          box-sizing: border-box;
          width: 55px;
          height: 26px;
          padding: 0 7px 0 3px;
          background: linear-gradient(#6b6b6b, #3a3a3a);
        }
        cad-icon.prompt { margin-left: 5px; }
        input {
          flex: 1;
          margin-left: 8px;
          padding: 0;
          border: 0;
          outline: 0;
          background: none;
          font: inherit;
          font-style: italic;
        }
        input::placeholder { color: #77797b; opacity: 1; }
        .drop { opacity: .7; margin-left: 2px; }
      </style>
      <ol>
        <li>Autodesk DWG.  This file is a TrustedDWG last saved by an Autodesk application or Autodesk licensed application.</li>
        <li>Command:</li>
        <li>Command:</li>
      </ol>
      <div class="line">
        <div class="tools"><cad-icon name="grip"></cad-icon><cad-icon name="cmdx"></cad-icon><cad-icon name="wrench"></cad-icon></div>
        <cad-icon class="prompt" name="prompt"></cad-icon>
        <cad-icon class="drop" name="navcaret"></cad-icon>
        <input type="text" aria-label="Command" placeholder="Type a command">
        <icon-button narrow icon="up"></icon-button>
      </div>
    `;
  }
}

class DrawingView extends CadElement {
  render() {
    return `
      <style>
        :host { display: block; position: relative; min-height: 0; overflow: hidden; background: #212830; color: #e6e6e6; }
        .label { position: absolute; top: 6px; left: 3px; }
        .controls { position: absolute; top: 9px; right: 10px; display: flex; gap: 8px; }
        .controls icon-button { width: 12px; height: 12px; }
        view-cube { position: absolute; top: 40px; right: 17px; }
        nav-bar { position: absolute; top: 236px; right: 4px; }
        command-line { position: absolute; right: 379px; bottom: 1px; left: 380px; }
        .ucs { position: absolute; bottom: 15px; left: 15px; }
        .ucs path { fill: none; stroke: #e4e4e4; }
      </style>
      <ridge-drawing></ridge-drawing>
      <span class="label">[−][Top][2D Wireframe]</span>
      <div class="controls">
        <icon-button icon="docmin"></icon-button>
        <icon-button icon="docmax"></icon-button>
        <icon-button icon="docclose"></icon-button>
      </div>
      <view-cube></view-cube>
      <nav-bar></nav-bar>
      <svg class="ucs" width="76" height="76" font-family="Liberation Sans, Arial, sans-serif" font-size="18" fill="#ddd">
        <path d="M5.500 20v50H56M1.500 65.500h9v9h-9z"/>
        <text x="7" y="16">Y</text><text x="60" y="69">X</text>
      </svg>
      <command-line></command-line>
    `;
  }
}

class StatusBar extends CadElement {
  render() {
    const groups = [
      ['grid', 'snap', '|'],
      ['ortho*', 'polar', '|', 'iso', '|'],
      ['otrack*', 'osnap*', '|'],
      ['annovis*', 'annoauto', 'anno', '1:1', '|'],
      ['gear', '|'],
      ['plus'],
      ['shapes'],
      ['trusted', 'perf'],
      ['clean', 'menu'],
    ];
    const item = n => {
      if (n === '|') return '<icon-button class="drop" icon="caret"></icon-button>';
      if (n === '1:1') return '<button type="button">1:1</button>';
      return `<icon-button icon="${n.replace('*', '')}" ${n.endsWith('*') ? 'on' : ''}></icon-button>`;
    };
    return `
      <style>
        :host { display: flex; align-items: flex-start; height: 28px; border-top: 1px solid #4d5053; background: #363636; }
        .tab {
          box-sizing: border-box;
          height: 18px;
          margin-right: 3px;
          padding: 0 9px;
          border-radius: 2px 2px 10px 10px / 2px 2px 16px 16px;
          background: #525252;
          color: #a9b0bd;
          line-height: 16px;
          text-decoration: none;
        }
        .tab.on {
          margin-left: 13px;
          background: linear-gradient(#6b6b6b, #8d8d8d);
          color: #fff;
          font-weight: bold;
        }
        .add { width: 21px; height: 16px; margin-left: 2px; border-radius: 8px 2px 10px 3px; background: #525252; }
        .right { display: flex; gap: 1px; margin-left: auto; margin-right: 1px; color: #fff; }
        .drop { width: 14px; }
        .group {
          box-sizing: border-box;
          display: flex;
          align-items: stretch;
          height: 27px;
          padding: 1px 0;
          border: 1px solid #7b7b7b;
          background: #4d4d4d;
        }
        button { padding: 0 3px; border: 0; background: none; color: inherit; font: inherit; }
      </style>
      <a class="tab on" href="#">Model</a>
      <a class="tab" href="#">Layout2</a>
      <icon-button class="add" icon="add"></icon-button>
      <div class="right">
        <div class="group"><button type="button">MODEL</button></div>
        ${groups.map(g => `<div class="group">${g.map(item).join('')}</div>`).join('')}
      </div>
    `;
  }
}

class CadApp extends CadElement {
  render() {
    return `
      <style>
        :host {
          box-sizing: border-box;
          display: flex;
          position: relative;
          height: 100vh;
          padding: 3px 8px 7px 6px;
          background: linear-gradient(90deg, #cbcdcc, #e2e4e3 5px, #d3d5d4 60px, #d3d5d4 calc(100% - 30px), #e0e2e1);
        }
        .window {
          flex: 1;
          position: relative;
          display: grid;
          grid-template-rows: auto auto auto auto 1fr auto;
          grid-template-columns: minmax(0, 1fr);
          min-width: 0;
          border-radius: 8px;
          overflow: hidden;
          box-shadow: 0 0 0 1px #a2a4a3;
        }
        .app {
          position: absolute;
          top: 7px;
          left: 0;
          display: flex;
          align-items: center;
          gap: 3px;
          box-sizing: border-box;
          width: 41px;
          height: 41px;
          padding: 0 2px 2px 4px;
          border: 1px solid #000;
          background: linear-gradient(#b5b5b5, #6f6f6f 60%, #8a8a8a);
        }
        .app svg { margin-top: 6px; }
        .behind { position: absolute; top: 726px; right: 0; color: #334; font-size: 8px; font-weight: bold; }
      </style>
      <div class="window">
        <title-bar></title-bar>
        <ribbon-tabs></ribbon-tabs>
        <cad-ribbon></cad-ribbon>
        <file-tabs></file-tabs>
        <drawing-view></drawing-view>
        <status-bar></status-bar>
        <button class="app" type="button" aria-label="Application menu">
          <cad-icon name="logo"></cad-icon><svg width="7" height="5"><path d="M0 0h7L3.500 4.500z" fill="#222"/></svg>
        </button>
      </div>
      <span class="behind">M</span>
    `;
  }
}

customElements.define('cad-icon', CadIcon);
customElements.define('icon-button', IconButton);
customElements.define('tool-button', ToolButton);
customElements.define('tool-grid', ToolGrid);
customElements.define('ribbon-panel', RibbonPanel);
customElements.define('cad-combo', CadCombo);
customElements.define('title-bar', TitleBar);
customElements.define('ribbon-tabs', RibbonTabs);
customElements.define('cad-ribbon', CadRibbon);
customElements.define('file-tab', FileTab);
customElements.define('file-tabs', FileTabs);
customElements.define('ridge-drawing', RidgeDrawing);
customElements.define('view-cube', ViewCube);
customElements.define('nav-bar', NavBar);
customElements.define('command-line', CommandLine);
customElements.define('drawing-view', DrawingView);
customElements.define('status-bar', StatusBar);
customElements.define('cad-app', CadApp);
</script>
</body>
</html>
